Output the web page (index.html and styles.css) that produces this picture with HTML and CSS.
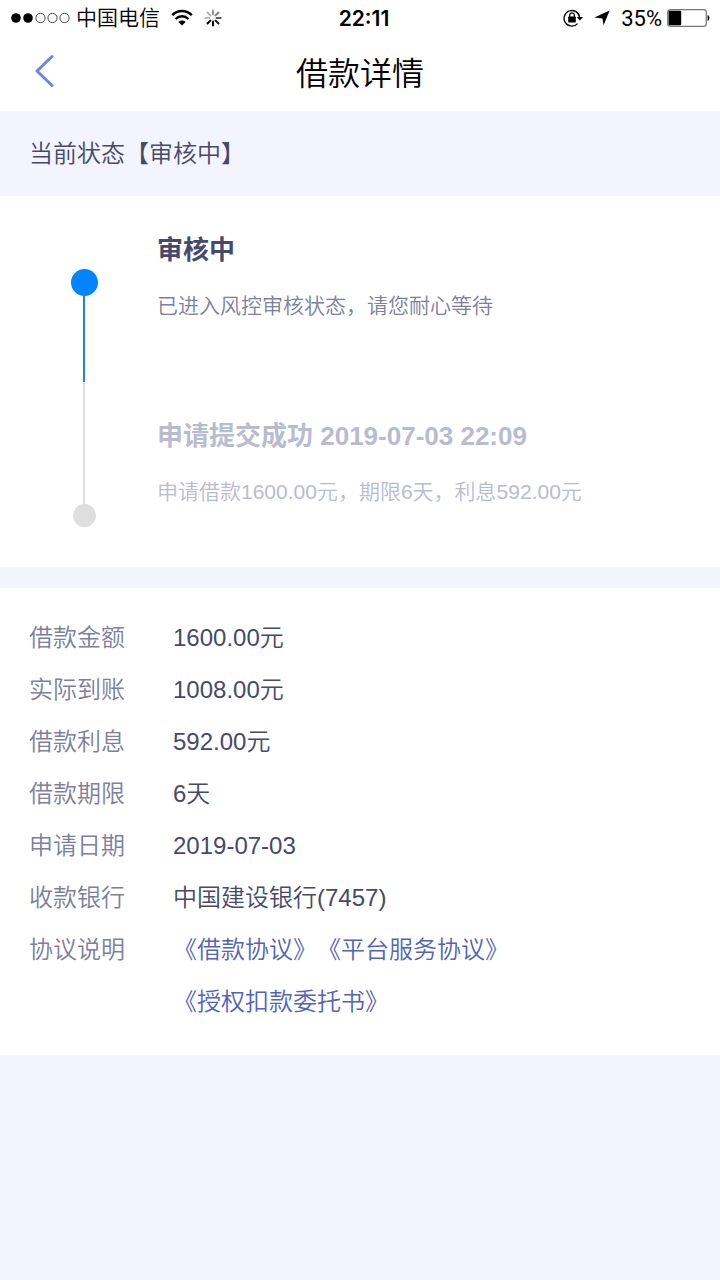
FILE: index.html
```html
<!DOCTYPE html>
<html lang="zh-CN">
<head>
    <meta charset="UTF-8">
    <meta name="viewport" content="width=device-width, initial-scale=1.0">
    <title>借款详情</title>
    <link rel="stylesheet" href="styles.css">
</head>
<body>

<div class="status-bar">
    <div class="status-left">
        <svg class="signal" width="60" height="12" viewBox="0 0 60 12">
            <circle cx="5" cy="6" r="4.8"/>
            <circle cx="17" cy="6" r="4.8"/>
            <g fill="none" stroke="#000" stroke-width="0.7">
                <circle cx="29.5" cy="6" r="4.6"/>
                <circle cx="41.5" cy="6" r="4.6"/>
                <circle cx="53.5" cy="6" r="4.6"/>
            </g>
        </svg>
        <span class="carrier">中国电信</span>
        <svg class="wifi" width="22" height="18" viewBox="0 0 22 18">
            <g fill="none" stroke="#000" stroke-width="2.4">
                <path d="M1.2 6.2 C6.6 0.5 15.4 0.5 20.8 6.2"/>
                <path d="M4.6 10 C8.2 6.3 13.8 6.3 17.4 10"/>
            </g>
            <path d="M7.4 12.9 C9.4 10.9 12.6 10.9 14.6 12.9 L11 16.4 Z"/>
        </svg>
        <svg class="spinner" width="18" height="18" viewBox="0 0 18 18">
            <g stroke="#000" stroke-width="2" stroke-linecap="round">
                <path d="M9 12.6 V16.6"/>
                <path d="M11.6 11.6 L14.5 14.5" opacity="0.9"/>
                <path d="M12.6 9 H16.6" opacity="0.65"/>
                <path d="M11.6 6.4 L14.5 3.5" opacity="0.5"/>
                <path d="M9 5.4 V1.4" opacity="0.4"/>
                <path d="M6.4 6.4 L3.5 3.5" opacity="0.3"/>
                <path d="M5.4 9 H1.4" opacity="0.25"/>
                <path d="M6.4 11.6 L3.5 14.5"/>
            </g>
        </svg>
    </div>
    <span class="time">22:11</span>
    <div class="status-right">
        <svg class="lock" width="20" height="18" viewBox="0 0 20 18">
            <path d="M14.6 14.6 A7.8 7.8 0 1 1 16.6 8.4" fill="none" stroke="#000" stroke-width="1.3"/>
            <path d="M13.8 8 H20 L16.9 11.4 Z"/>
            <rect x="5.2" y="7.6" width="7.6" height="5.8" rx="0.6"/>
            <path d="M6.7 8 V6.2 a2.3 2.3 0 0 1 4.6 0 V8" fill="none" stroke="#000" stroke-width="1.3"/>
        </svg>
        <svg class="location" width="16" height="16" viewBox="0 0 16 16">
            <path d="M15.6 0.6 L9.6 15.2 L8.4 8.4 L0.4 7.6 Z"/>
        </svg>
        <span class="percent">35%</span>
        <svg class="battery" width="44" height="18" viewBox="0 0 44 18">
            <rect x="0.7" y="0.7" width="38.6" height="16.6" rx="2.6" fill="none" stroke="#777" stroke-width="1.2"/>
            <rect x="1.6" y="1.8" width="12.6" height="14.4" rx="0.8"/>
            <path d="M40.6 6 C43 7 43 11 40.6 12 Z"/>
        </svg>
    </div>
</div>

<header class="nav">
    <button class="back" type="button" aria-label="返回">
        <svg width="20" height="34" viewBox="0 0 20 34">
            <path d="M18 2.5 L3 17 L18 31.5" fill="none" stroke="#6b87e0" stroke-width="3" stroke-linecap="round" stroke-linejoin="round"/>
        </svg>
    </button>
    <h1>借款详情</h1>
</header>

<p class="current">当前状态【审核中】</p>

<ol class="timeline">
    <li class="step step-active">
        <div class="rail">
            <span class="dot"></span>
            <span class="line"></span>
        </div>
        <div class="step-body">
            <h2>审核中</h2>
            <p>已进入风控审核状态，请您耐心等待</p>
        </div>
    </li>
    <li class="step step-done">
        <div class="rail">
            <span class="line"></span>
            <span class="dot"></span>
        </div>
        <div class="step-body">
            <h2>申请提交成功 2019-07-03 22:09</h2>
            <p>申请借款1600.00元，期限6天，利息592.00元</p>
        </div>
    </li>
</ol>

<dl class="details">
    <dt>借款金额</dt>
    <dd>1600.00元</dd>
    <dt>实际到账</dt>
    <dd>1008.00元</dd>
    <dt>借款利息</dt>
    <dd>592.00元</dd>
    <dt>借款期限</dt>
    <dd>6天</dd>
    <dt>申请日期</dt>
    <dd>2019-07-03</dd>
    <dt>收款银行</dt>
    <dd>中国建设银行(7457)</dd>
    <dt>协议说明</dt>
    <dd class="agreements">
        <div><a href="#loan">《借款协议》</a><a href="#service">《平台服务协议》</a></div>
        <div><a href="#debit">《授权扣款委托书》</a></div>
    </dd>
</dl>

</body>
</html>
```

FILE: styles.css
```css
body {
    margin: 0;
    background-color: #f3f4fd;
    color: #454a6b;
    font-family: "Liberation Sans", "Noto Sans CJK SC", sans-serif;
    font-size: 24px;
    font-weight: 350;
    text-spacing-trim: space-all;
}
h1, h2, p, ol, dl, dd {
    margin: 0;
    padding: 0;
}
svg {
    display: block;
}

/* phone status bar */
.status-bar {
    display: grid;
    grid-template-columns: 1fr auto 1fr;
    align-items: center;
    height: 36px;
    padding: 0 9px 0 11px;
    background-color: #fff;
    color: #000;
    font-size: 21px;
}
.status-left, .status-right {
    display: flex;
    align-items: center;
}
.status-right {
    justify-content: flex-end;
}
.carrier {
    margin: 0 11px 0 5px;
    line-height: 36px;
}
.spinner {
    margin-left: 11px;
}
.time {
    padding-left: 6px;
    font-family: Inter, sans-serif;
    font-weight: 600;
}
.location {
    margin: 0 11px;
}
.percent {
    margin-right: 5px;
    font-family: Roboto, sans-serif;
    font-size: 22px;
    font-weight: 400;
}

/* title bar */
.nav {
    display: grid;
    grid-template-columns: 1fr auto 1fr;
    align-items: center;
    height: 69px;
    padding: 0 34px 6px;
    background-color: #fff;
    color: #000;
}
.nav h1 {
    font-size: 32px;
    font-weight: 350;
}
.back {
    justify-self: start;
    padding: 0;
    border: none;
    background: none;
    cursor: pointer;
}

.current {
    padding: 0 29px;
    line-height: 85px;
}

/* progress */
.timeline {
    margin-bottom: 21px;
    background-color: #fff;
    list-style: none;
}
.step {
    display: grid;
    grid-template-columns: 60px 1fr;
    column-gap: 43px;
    padding-left: 54px;
}
.rail {
    display: flex;
    flex-direction: column;
    align-items: center;
}
.dot {
    width: 23px;
    height: 23px;
    border-radius: 50%;
    background-color: #dedede;
}
.line {
    flex: 1;
    width: 2px;
    background-color: #dedede;
}
.step-active .rail {
    padding-top: 73px;
}
.step-active .dot {
    width: 27px;
    height: 27px;
    background-color: #0084ff;
}
.step-active .line {
    background-color: #1a86e8;
}
.step-done .rail {
    padding-bottom: 40px;
}
.step-body {
    padding: 28px 30px 60px 0;
}
.step-done .step-body {
    padding-bottom: 59px;
}
.step-body h2 {
    margin-bottom: 14px;
    font-size: 26px;
    font-weight: 600;
    line-height: 52px;
}
.step-body p {
    color: #7c809d;
    font-size: 21px;
    line-height: 32px;
}
.step-done .step-body h2,
.step-done .step-body p {
    color: #b9bbd0;
}

/* loan details */
.details {
    display: grid;
    grid-template-columns: 97px 1fr;
    column-gap: 47px;
    padding: 24px 29px 27px;
    background-color: #fff;
    line-height: 52px;
}
.details dt {
    color: #7c809d;
}
.agreements a {
    color: #5163bd;
    text-decoration: none;
}
```
